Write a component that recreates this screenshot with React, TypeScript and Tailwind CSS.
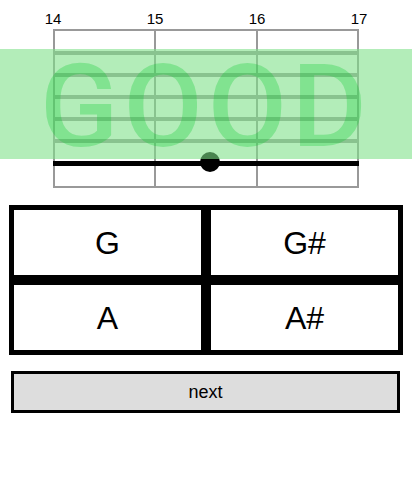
import React from "react"

const frets = ["14", "15", "16", "17"]
const answers = ["G", "G#", "A", "A#"]

export default function App() {
  return (
    <div className="relative h-[481px] w-[412px] bg-white font-['Liberation_Sans',Arial,sans-serif] text-black">
      {/* fret numbers */}
      <div className="ml-[41px] flex w-[330px] justify-between pt-[10px] text-[15px] leading-[17px]">
        {frets.map((f) => (
          <span key={f} className="w-6 text-center">
            {f}
          </span>
        ))}
      </div>

      {/* fretboard */}
      <div className="relative ml-[53px] mt-[2px] w-[306px]">
        <div className="flex h-[159px] border-2 border-[#999]">
          <div className="w-[101px] border-r-2 border-[#999]" />
          <div className="w-[102px] border-r-2 border-[#999]" />
          <div className="w-[99px]" />
        </div>
        <div className="absolute inset-0 flex flex-col gap-[18px] pt-[22px]">
          <div className="h-[4px] bg-[#999]" />
          <div className="h-[4px] bg-[#999]" />
          <div className="h-[4px] bg-[#999]" />
          <div className="h-[4px] bg-[#999]" />
          <div className="h-[4px] bg-[#999]" />
          <div className="relative h-[5px] bg-black">
            <div className="absolute left-[147px] top-[-9px] size-5 rounded-full bg-black" />
          </div>
        </div>
      </div>

      {/* result overlay */}
      <div className="absolute left-0 top-[49px] flex h-[110px] w-full items-center justify-center bg-[rgba(125,224,136,0.59)] pt-[4px]">
        <span className="font-['Roboto',sans-serif] text-[115px] font-medium leading-none tracking-[5px] text-[rgba(0,200,40,0.28)]">
          GOOD
        </span>
      </div>

      {/* answers */}
      <div className="ml-[9px] mt-[17px] grid w-[394px] grid-cols-2">
        {answers.map((a) => (
          <button
            key={a}
            className="flex h-[75px] items-center justify-center border-[5px] border-black bg-white text-[32px]"
          >
            {a}
          </button>
        ))}
      </div>

      <button className="ml-[11px] mt-[16px] flex h-[42px] w-[389px] items-center justify-center border-[3px] border-black bg-[#ddd] text-[18px]">
        next
      </button>
    </div>
  )
}
